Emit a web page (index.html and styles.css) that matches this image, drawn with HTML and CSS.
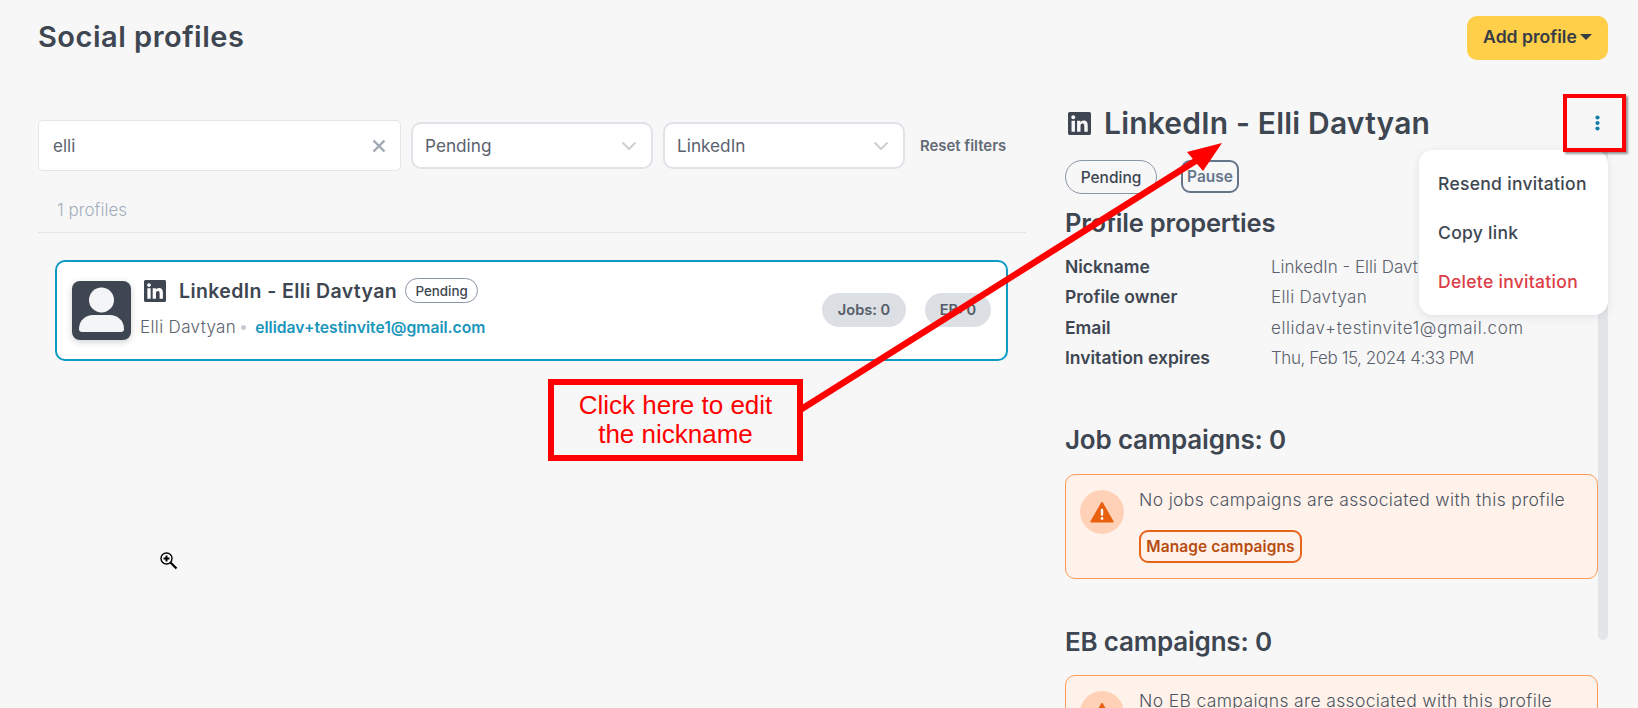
FILE: index.html
```html
<!DOCTYPE html>
<html lang="en">
<head>
<meta charset="utf-8">
<title>Social profiles</title>
<link rel="stylesheet" href="styles.css">
</head>
<body>
<svg width="0" height="0" class="defs">
  <symbol id="li" viewBox="0 32 448 448"><path d="M416 32H31.9C14.3 32 0 46.5 0 64.3v383.4C0 465.5 14.3 480 31.9 480H416c17.6 0 32-14.5 32-32.3V64.3c0-17.8-14.4-32.3-32-32.3zM135.4 416H69V202.2h66.5V416zm-33.2-243c-21.3 0-38.5-17.3-38.5-38.5S80.9 96 102.2 96c21.2 0 38.5 17.3 38.5 38.5 0 21.3-17.2 38.5-38.5 38.5zm282.1 243h-66.4V312c0-24.8-.5-56.7-34.5-56.7-34.6 0-39.9 27-39.9 54.9V416h-66.4V202.2h63.7v29.2h.9c8.9-16.8 30.6-34.5 62.9-34.5 67.2 0 79.7 44.3 79.7 101.9V416z"/></symbol>
  <symbol id="warn" viewBox="0 0 24 24"><path d="M12 3.500 L22 21 H2 Z" fill="#e8610f" stroke="#e8610f" stroke-width="1.600" stroke-linejoin="round"/><rect x="10.900" y="9" width="2.200" height="6.500" rx="1" fill="#fff"/><circle cx="12" cy="18" r="1.300" fill="#fff"/></symbol>
  <symbol id="chev" viewBox="0 0 16 10"><path d="M1.5 1.5 8 8l6.5-6.5" fill="none" stroke="#cfd0d2" stroke-width="2.2"/></symbol>
</svg>
<div class="page">
  <header class="top">
    <h1 class="page-title">Social profiles</h1>
    <button class="add-btn">Add profile<span class="caret"></span></button>
  </header>
  <main class="columns">
    <section class="left">
      <div class="filters">
        <div class="search"><span>elli</span>
          <svg class="clear" width="14" height="14" viewBox="0 0 14 14"><path d="M1.5 1.5l11 11M12.5 1.5l-11 11" stroke="#9fa8b2" stroke-width="2.4" fill="none"/></svg>
        </div>
        <div class="select"><span>Pending</span><svg width="16" height="10"><use href="#chev"/></svg></div>
        <div class="select"><span>LinkedIn</span><svg width="16" height="10"><use href="#chev"/></svg></div>
        <a class="reset">Reset filters</a>
      </div>
      <div class="count">1 profiles</div>
      <article class="card">
        <div class="avatar">
          <svg width="59" height="59" viewBox="0 0 59 59"><circle cx="29.5" cy="19" r="12.5" fill="#f4f5f6"/><path d="M7 48c0-9 7-14 14-14h17c7 0 14 5 14 14 0 2-1 3-3 3H10c-2 0-3-1-3-3z" fill="#f4f5f6"/></svg>
        </div>
        <div class="card-main">
          <div class="card-head">
            <svg class="li-s" width="22" height="22"><use href="#li"/></svg>
            <span class="card-name">LinkedIn - Elli Davtyan</span>
            <span class="pill pill-s">Pending</span>
          </div>
          <div class="card-sub">
            <span class="owner">Elli Davtyan</span><i class="dot"></i><span class="mail">ellidav+testinvite1@gmail.com</span>
          </div>
        </div>
        <div class="chips"><span class="chip">Jobs: 0</span><span class="chip chip-eb">EB: 0</span></div>
      </article>
    </section>
    <section class="right">
      <div class="detail">
        <div class="detail-head">
          <svg width="23" height="23"><use href="#li"/></svg>
          <h2 class="detail-title">LinkedIn - Elli Davtyan</h2>
          <svg class="kebab" width="5" height="16" viewBox="0 0 5 16"><circle cx="2.500" cy="2.500" r="2.100"/><circle cx="2.500" cy="8" r="2.100"/><circle cx="2.500" cy="13.500" r="2.100"/></svg>
        </div>
        <div class="tags"><span class="pill pill-l">Pending</span><span class="pause">Pause</span></div>
        <h3 class="sec sec-first">Profile properties</h3>
        <dl class="props">
          <dt>Nickname</dt><dd>LinkedIn - Elli Davtyan</dd>
          <dt>Profile owner</dt><dd class="v-name">Elli Davtyan</dd>
          <dt>Email</dt><dd class="v-mail">ellidav+testinvite1@gmail.com</dd>
          <dt>Invitation expires</dt><dd class="v-date">Thu, Feb 15, 2024 4:33 PM</dd>
        </dl>
        <h3 class="sec sec-job">Job campaigns: 0</h3>
        <div class="alert">
          <span class="alert-ic"><svg width="26" height="26"><use href="#warn"/></svg></span>
          <div class="alert-body">
            <p>No jobs campaigns are associated with this profile</p>
            <button class="manage">Manage campaigns</button>
          </div>
        </div>
        <h3 class="sec sec-eb">EB campaigns: 0</h3>
        <div class="alert">
          <span class="alert-ic"><svg width="26" height="26"><use href="#warn"/></svg></span>
          <div class="alert-body">
            <p>No EB campaigns are associated with this profile</p>
            <button class="manage">Manage campaigns</button>
          </div>
        </div>
      </div>
      <div class="scrollbar"></div>
      <ul class="menu">
        <li>Resend invitation</li>
        <li>Copy link</li>
        <li class="danger">Delete invitation</li>
      </ul>
    </section>
  </main>
  <svg class="arrow" width="1638" height="708" viewBox="0 0 1638 708">
    <line x1="800" y1="410" x2="1197" y2="160" stroke="#ff0000" stroke-width="6.500"/>
    <polygon points="1222,143 1187,152 1203,171" fill="#ff0000"/>
  </svg>
  <div class="callout">Click here to edit<br>the nickname</div>
  <div class="redbox"></div>
  <svg class="zoom-cursor" width="18" height="18" viewBox="0 0 18 18">
    <circle cx="6.500" cy="6.500" r="5.500" fill="#fff" stroke="#000" stroke-width="1.400"/>
    <path d="M6.500 3.500v6M3.500 6.500h6" stroke="#000" stroke-width="2"/>
    <path d="M10.500 10.500l6 6" stroke="#000" stroke-width="2.200"/>
  </svg>
</div>
</body>
</html>
```
FILE: styles.css
```css
* { box-sizing: border-box; }
html, body { margin: 0; padding: 0; }
body { font-family: Inter, "Open Sans", "Liberation Sans", sans-serif; color: #3e4651; background: #f7f7f8; }
.defs { position: absolute; }
.page { position: relative; width: 1638px; height: 708px; overflow: hidden; background: #f7f7f8; }
h1, h2, h3, p, ul, dl, dd { margin: 0; padding: 0; }
.top { display: flex; justify-content: space-between; align-items: flex-start; padding: 16px 30px 0 38px; height: 105px; }
.page-title { font-size: 29px; font-weight: 600; line-height: 42px; letter-spacing: .5px; }
.add-btn { width: 141px; height: 44px; background: #ffcf4a; border: 0; border-radius: 10px; font: 600 17.600px/42px Inter, sans-serif; color: #363c45; display: flex; align-items: center; justify-content: center; gap: 3px; padding: 0 0 2px; }
.caret { width: 0; height: 0; border: 6px solid transparent; border-top-color: #363c45; border-bottom-width: 0; }
.columns { display: grid; grid-template-columns: 988px 543px; column-gap: 39px; padding-left: 38px; }
.left { padding-top: 15px; }
.filters { display: flex; align-items: center; gap: 10px; }
.search { width: 363px; height: 51px; background: #fff; border: 1px solid #e3e5e9; border-radius: 5px; display: flex; align-items: center; justify-content: space-between; padding: 0 14px 0 14px; font-size: 17px; color: #5b626d; }
.select { width: 242px; height: 47px; background: #fff; border: 2px solid #e0e2e7; border-radius: 10px; display: flex; align-items: center; justify-content: space-between; padding: 0 14px 0 12px; font-size: 17.2px; color: #5b626d; }
.reset { margin-left: 5px; font-size: 14.900px; font-weight: 600; color: #646b76; white-space: nowrap; }
.count { margin-top: 27px; padding: 0 0 9px 19px; font-size: 17px; font-weight: 300; color: #a3aebc; border-bottom: 1px solid #e2e4e8; line-height: 25px; }
.card { margin: 27px 0 0 17px; width: 953px; height: 101px; background: #fff; border: 2px solid #0e9ac2; border-radius: 10px; display: flex; align-items: flex-start; padding: 0 15px 0 15px; }
.avatar { width: 59px; height: 59px; margin-top: 19px; background: #3e4651; border-radius: 8px; box-shadow: 0 2px 6px rgba(62,70,81,.25); flex: none; }
.avatar svg { display: block; }
.card-main { flex: 1; margin: 16px 0 0 9px; }
.card-head { display: flex; align-items: center; margin-left: 4px; }
.li-s { margin-right: 13px; fill: #3e4651; }
.card-name { font-size: 19.500px; font-weight: 600; letter-spacing: .39px; }
.pill { border: 1px solid #8b96a6; border-radius: 20px; display: inline-flex; align-items: center; justify-content: center; font-weight: 500; }
.pill-s { margin-left: 8px; width: 73px; height: 25px; font-size: 13.400px; }
.card-sub { margin-top: 14px; display: flex; align-items: center; font-size: 17px; }
.owner { font-weight: 300; color: #5b626d; letter-spacing: .36px; }
.dot { width: 5px; height: 5px; border-radius: 50%; background: #c6cbd2; margin: 0 9px 0 5px; }
.mail { font-size: 15.700px; font-weight: 600; color: #1a95bb; }
.chips { display: flex; gap: 19px; margin-top: 31px; }
.chip { height: 34px; width: 84px; background: #dcdfe4; border-radius: 17px; font-size: 14.600px; font-weight: 600; color: #555c67; display: flex; align-items: center; justify-content: center; }
.chip-eb { width: 66px; }
.right { position: relative; display: flex; align-items: flex-start; }
.detail { width: 533px; flex: none; }
.detail-head { display: flex; align-items: center; height: 36px; padding-left: 3px; fill: #3e4651; }
.detail-title { margin-left: 13px; font-size: 30px; font-weight: 600; line-height: 36px; letter-spacing: .19px; flex: 1; }
.kebab { fill: #0f7fa8; margin-right: -2px; }
.tags { display: flex; gap: 24px; margin-top: 19px; }
.pill-l { width: 92px; height: 34px; font-size: 15.500px; }
.pause { width: 58px; height: 33px; border: 2px solid #66758a; border-radius: 9px; font-size: 15.500px; font-weight: 600; color: #66758a; display: flex; align-items: center; justify-content: center; }
.sec { font-size: 26px; font-weight: 600; line-height: 32px; letter-spacing: -.2px; }
.sec-first { margin-top: 13px; font-size: 25.500px; }
.props { display: grid; grid-template-columns: 206px 1fr; grid-auto-rows: 30.300px; margin-top: 13px; font-size: 17.500px; line-height: 30.300px; }
.props dt { font-weight: 600; }
.props dd { font-size: 17px; font-weight: 300; color: #5b626d; white-space: nowrap; }
.props .v-name { letter-spacing: .36px; }
.props .v-mail { letter-spacing: .59px; }
.props .v-date { letter-spacing: -.44px; }
.sec-job { margin-top: 51px; }
.sec-eb { margin-top: 47px; }
.alert { margin-top: 18px; display: flex; height: 105px; background: #fff2ea; border: 1px solid #ff9a57; border-radius: 10px; padding: 15px 14px; }
.sec-eb + .alert { margin-top: 17px; }
.alert-ic { width: 44px; height: 44px; border-radius: 50%; background: #ffd2b8; display: flex; align-items: center; justify-content: center; flex: none; }
.alert-ic svg { display: block; }
.alert-body { margin-left: 15px; padding-top: 2px; }
.alert-body p { font-size: 17.500px; font-weight: 300; line-height: 24px; letter-spacing: .36px; color: #4d5562; margin-top: -4px; white-space: nowrap; }
.manage { margin-top: 18px; width: 163px; height: 33px; background: transparent; border: 2px solid #e8651a; border-radius: 9px; font: 600 15.500px Inter, sans-serif; letter-spacing: .1px; color: #b84c10; padding: 0; display: block; }
.scrollbar { width: 10px; height: 490px; margin-top: 45px; background: #e4e5e8; border-radius: 0 0 5px 5px; flex: none; }
.menu { position: absolute; left: 354px; top: 45px; width: 189px; height: 165px; background: #fff; border-radius: 14px; box-shadow: 0 2px 8px rgba(60,70,85,.12); list-style: none; padding: 9px 0 0 19px; }
.menu li { font-size: 17.500px; font-weight: 500; line-height: 49px; letter-spacing: .3px; color: #3e4651; white-space: nowrap; }
.menu .danger { color: #dc3d48; }
.arrow { position: absolute; left: 0; top: 0; pointer-events: none; }
.callout { position: absolute; left: 548px; top: 379px; width: 255px; height: 82px; border: 6px solid #f00; font: 26px/29px "Liberation Sans", Arial, sans-serif; color: #f00; text-align: center; padding-top: 6px; background: #f7f7f8; }
.redbox { position: absolute; left: 1563px; top: 94px; width: 63px; height: 58px; border: 4px solid #f00; box-shadow: 2px 2px 2px rgba(0,0,0,.4); }
.zoom-cursor { position: absolute; left: 160px; top: 552px; }
```
